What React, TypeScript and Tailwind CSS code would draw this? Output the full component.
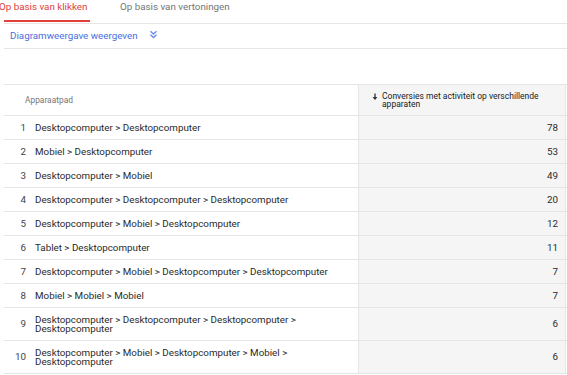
import React from "react";

const rows: { n: number; path: string; v: number; tall?: boolean }[] = [
  { n: 1, path: "Desktopcomputer > Desktopcomputer", v: 78 },
  { n: 2, path: "Mobiel > Desktopcomputer", v: 53 },
  { n: 3, path: "Desktopcomputer > Mobiel", v: 49 },
  { n: 4, path: "Desktopcomputer > Desktopcomputer > Desktopcomputer", v: 20 },
  { n: 5, path: "Desktopcomputer > Mobiel > Desktopcomputer", v: 12 },
  { n: 6, path: "Tablet > Desktopcomputer", v: 11 },
  { n: 7, path: "Desktopcomputer > Mobiel > Desktopcomputer > Desktopcomputer", v: 7 },
  { n: 8, path: "Mobiel > Mobiel > Mobiel", v: 7 },
  { n: 9, path: "Desktopcomputer > Desktopcomputer > Desktopcomputer > Desktopcomputer", v: 6, tall: true },
  { n: 10, path: "Desktopcomputer > Mobiel > Desktopcomputer > Mobiel > Desktopcomputer", v: 6, tall: true },
];

export default function App() {
  return (
    <div
      className="w-[567px] h-[375px] overflow-hidden bg-white"
      style={{ fontFamily: "Roboto, 'Liberation Sans', sans-serif" }}
    >
      {/* Tabs */}
      <div className="ml-[4px] h-[24px] border-b border-[#e6e6e6] flex items-start">
        <div className="w-[86px] h-[22px] border-b-2 border-[#e0413a] relative">
          <span className="absolute left-[-5px] top-[1px] whitespace-nowrap text-[9.8px] leading-[12px] text-[#e0413a]">
            Op basis van klikken
          </span>
        </div>
        <div className="ml-[30px] pt-[1px] text-[9.8px] leading-[12px] text-[#757575] whitespace-nowrap">
          Op basis van vertoningen
        </div>
      </div>

      {/* Link row */}
      <div className="ml-[4px] h-[25px] border-b border-[#e6e6e6] flex items-center">
        <span className="ml-[6px] text-[9.8px] leading-[12px] text-[#4a6ee0] whitespace-nowrap">
          Diagramweergave weergeven
        </span>
        <svg className="ml-[11px] mt-[-3px]" width="9" height="9" viewBox="0 0 9 9" fill="none">
          <path d="M1.5 1.2 L4.5 4 L7.5 1.2" stroke="#6b8ff0" strokeWidth="1.4" />
          <path d="M1.5 4.8 L4.5 7.6 L7.5 4.8" stroke="#6b8ff0" strokeWidth="1.4" />
        </svg>
      </div>

      <div className="h-[35px]" />

      {/* Table */}
      <div className="ml-[4px] border-t border-[#e6e6e6]">
        {/* Header */}
        <div className="flex h-[31px] border-b border-[#e6e6e6]">
          <div className="w-[354px] flex items-center pl-[21px]">
            <span className="text-[8.4px] leading-[10px] text-[#757575]">Apparaatpad</span>
          </div>
          <div className="w-[208px] border-x border-[#e6e6e6] bg-[#f5f5f5] flex items-center pl-[13px]">
            <svg width="6" height="8" viewBox="0 0 6 8" className="mt-[-6px] mr-[4px] shrink-0">
              <path d="M3 0.5 V6" stroke="#333" strokeWidth="1.3" />
              <path d="M0.6 4 L3 7 L5.4 4 Z" fill="#333" />
            </svg>
            <span className="text-[8.5px] leading-[8.5px] text-[#212121]">
              Conversies met activiteit op verschillende
              <br />
              apparaten
            </span>
          </div>
          <div className="flex-1" />
        </div>

        {rows.map((r) => (
          <div
            key={r.n}
            className={`flex border-b border-[#e6e6e6] ${r.tall ? "h-[33px]" : "h-[24px]"}`}
          >
            <div className="w-[354px] flex items-center">
              <span className="w-[22px] text-right text-[9.8px] leading-[10px] text-[#424242] shrink-0">
                {r.n}
              </span>
              <span className="ml-[9px] max-w-[300px] text-[9.8px] leading-[9px] text-[#2a2a2a]">
                {r.path}
              </span>
            </div>
            <div className="w-[208px] border-x border-[#e6e6e6] bg-[#f5f5f5] flex items-center justify-end pr-[7px]">
              <span className="text-[9.8px] leading-[10px] text-[#2a2a2a]">{r.v}</span>
            </div>
            <div className="flex-1" />
          </div>
        ))}
      </div>
    </div>
  );
}
